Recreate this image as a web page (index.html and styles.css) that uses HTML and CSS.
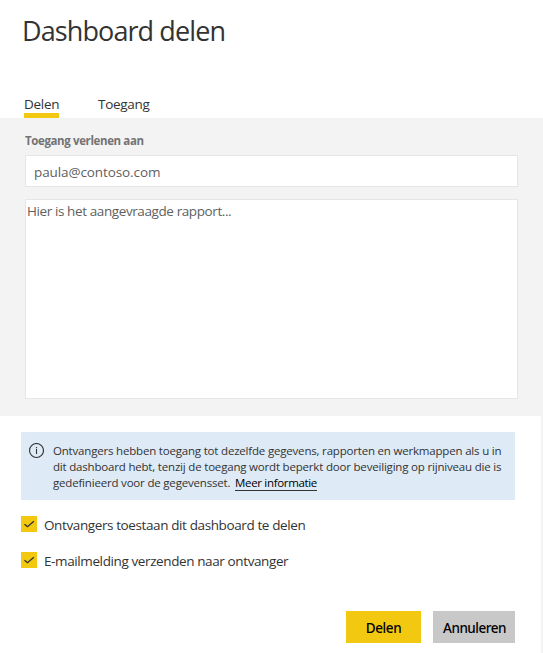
FILE: index.html
```
<!DOCTYPE html>
<html lang="nl">
<head>
<meta charset="utf-8">
<title>Dashboard delen</title>
<link rel="stylesheet" href="styles.css">
</head>
<body>
<main class="dialog">
  <header class="header">
    <h1 class="title">Dashboard delen</h1>
    <nav class="tabs">
      <a class="tab tab-active">Delen</a>
      <a class="tab">Toegang</a>
    </nav>
  </header>
  <section class="panel">
    <div class="label">Toegang verlenen aan</div>
    <div class="field recipient">paula@contoso.com</div>
    <div class="field message">Hier is het aangevraagde rapport...</div>
  </section>
  <section class="body">
    <div class="info">
      <svg class="info-icon" width="16" height="16" viewBox="0 0 16 16">
        <circle cx="8.5" cy="7.5" r="7" fill="none" stroke="#333" stroke-width="1.1"/>
        <path d="M8.5 6v5M8.5 4v1.2" stroke="#333" stroke-width="1.1"/>
      </svg>
      <p class="info-text">Ontvangers hebben toegang tot dezelfde gegevens, rapporten en werkmappen als u in<br>dit dashboard hebt, tenzij de toegang wordt beperkt door beveiliging op rijniveau die is<br>gedefinieerd voor de gegevensset. <a class="more">Meer informatie</a></p>
    </div>
    <div class="option">
      <svg class="check" width="16" height="16" viewBox="0 0 16 16"><path d="M3.5 8.2l3 2.5 6.4-5.4" fill="none" stroke="#333" stroke-width="1.4"/></svg>
      <span>Ontvangers toestaan dit dashboard te delen</span>
    </div>
    <div class="option">
      <svg class="check" width="16" height="16" viewBox="0 0 16 16"><path d="M3.5 8.2l3 2.5 6.4-5.4" fill="none" stroke="#333" stroke-width="1.4"/></svg>
      <span>E-mailmelding verzenden naar ontvanger</span>
    </div>
    <footer class="actions">
      <div class="button primary">Delen</div>
      <div class="button secondary">Annuleren</div>
    </footer>
  </section>
</main>
</body>
</html>
```
FILE: styles.css
```
* { box-sizing: border-box; }
body {
  margin: 0;
  background: #fff;
  color: #333;
  font: 13.5px/20px "Open Sans", "Noto Sans", sans-serif;
  white-space: nowrap;
}
.dialog { height: 653px; overflow: hidden; }
.header {
  height: 118px;
  padding: 13px 0 0 22px;
}
.title {
  margin: 0 0 45px;
  font-size: 27px;
  line-height: 36px;
  font-weight: 400;
  letter-spacing: -0.9px;
}
.tabs { display: flex; gap: 39px; padding-left: 2px; }
.tab { height: 24px; letter-spacing: -0.3px; }
.tab-active { width: 35px; border-bottom: 5px solid #f2c811; }
.panel {
  height: 298px;
  padding: 15px 25px 0;
  background: #f3f3f3;
}
.label {
  height: 22px;
  color: #737373;
  font-size: 11.5px;
  line-height: 16px;
  font-weight: 700;
  letter-spacing: -0.38px;
}
.field { border: 1px solid #e6e6e6; background: #fff; color: #5f5f5f; }
.recipient {
  height: 32px;
  margin-bottom: 12px;
  padding: 6px 8px;
  letter-spacing: -0.1px;
}
.message {
  height: 200px;
  padding: 1px;
  letter-spacing: -0.4px;
}
.body {
  height: 237px;
  padding: 16px 26px 0 21px;
  border-right: 2px solid #f3f3f3;
}
.info {
  display: flex;
  height: 68px;
  margin-bottom: 15px;
  padding: 11px 0 0 7px;
  background: #deeaf6;
}
.info-icon { flex: none; margin: 0 9px 0 0; }
.info-text {
  margin: 0;
  font-size: 11.5px;
  line-height: 16px;
  letter-spacing: -0.19px;
}
.more {
  display: inline-block;
  height: 16px;
  margin-left: 2px;
  border-bottom: 1px solid #333;
  color: #000;
  letter-spacing: -0.33px;
}
.option { display: flex; height: 20px; margin-bottom: 16px; letter-spacing: -0.39px; }
.check { flex: none; margin: 1px 7px 0 0; background: #f2c811; }
.actions { display: flex; justify-content: flex-end; gap: 12px; padding-top: 24px; }
.button {
  height: 32px;
  padding-top: 7px;
  color: #000;
  font-family: "Noto Sans", "Open Sans", sans-serif;
  font-weight: 500;
  text-align: center;
}
.primary { width: 75px; background: #f2c811; letter-spacing: -0.35px; }
.secondary { width: 82px; padding-left: 1px; background: #c8c8c8; letter-spacing: -0.5px; }
```
